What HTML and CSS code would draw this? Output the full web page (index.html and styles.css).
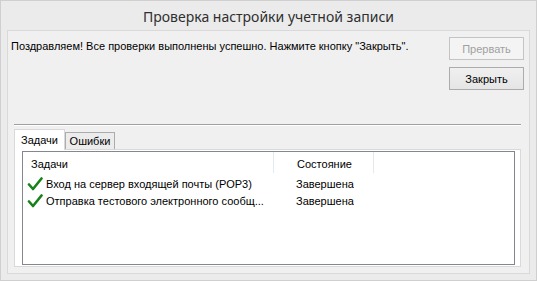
FILE: index.html
```html
<!DOCTYPE html>
<html lang="ru">
  <head>
    <meta charset="UTF-8" />
    <title>Проверка настройки учетной записи</title>
    <link rel="stylesheet" href="styles.css">
  </head>
  <body>
    <div class="window">
      <div class="titlebar">Проверка настройки учетной записи</div>
      <div class="client">
        <div class="top">
          <p class="message">Поздравляем! Все проверки выполнены успешно. Нажмите кнопку "Закрыть".</p>
          <div class="actions">
            <button class="btn" disabled>Прервать</button>
            <button class="btn">Закрыть</button>
          </div>
        </div>
        <div class="separator"></div>

        <div class="tabs">
          <div class="tabstrip">
            <div class="tab active">Задачи</div>
            <div class="tab">Ошибки</div>
          </div>
          <div class="tabpanel">
            <div class="listview">
              <div class="lv-header">
                <div class="col col-task">Задачи</div>
                <div class="col col-state">Состояние</div>
                <div class="col col-rest"></div>
              </div>
              <div class="lv-row">
                <svg class="check" viewBox="0 0 16 16" width="16" height="16">
                  <polyline points="2,8.5 6,13 14.5,2.5" />
                </svg>
                <span class="cell task">Вход на сервер входящей почты (POP3)</span>
                <span class="cell state">Завершена</span>
              </div>
              <div class="lv-row">
                <svg class="check" viewBox="0 0 16 16" width="16" height="16">
                  <polyline points="2,8.5 6,13 14.5,2.5" />
                </svg>
                <span class="cell task">Отправка тестового электронного сообщ...</span>
                <span class="cell state">Завершена</span>
              </div>
            </div>
          </div>
        </div>
      </div>
    </div>
  </body>
</html>
```

FILE: styles.css
```css
* {
  box-sizing: border-box;
}
body {
  margin: 0;
  font-family: "Liberation Sans", Arial, sans-serif;
  font-size: 11px;
  color: #000;
  background: #fff;
}
.window {
  width: 537px;
  height: 281px;
  display: flex;
  flex-direction: column;
  background: #ebebeb;
  border: 1px solid #cfcfcf;
  padding: 0 6px 6px 6px;
}
.titlebar {
  height: 29px;
  line-height: 31px;
  text-align: center;
  font-family: "Noto Sans", "Open Sans", sans-serif;
  font-size: 14px;
  color: #2f2f2f;
}
.client {
  flex: 1;
  display: flex;
  flex-direction: column;
  background: #f0f0f0;
  border: 1px solid #d9d9d9;
}
.top {
  display: flex;
  padding: 6px 5px 0 3px;
}
.message {
  flex: 1;
  margin: 3px 0 0;
  line-height: 13px;
}
.actions {
  display: flex;
  flex-direction: column;
  gap: 7px;
}
.btn {
  width: 75px;
  height: 23px;
  padding: 0;
  font-family: inherit;
  font-size: 11px;
  color: #000;
  border: 1px solid #acacac;
  border-radius: 0;
  background: linear-gradient(#f0f0f0, #e5e5e5);
}
.btn:disabled {
  color: #a0a0a0;
  border-color: #c4c4c4;
  background: #f4f4f4;
}
.separator {
  margin: 34px 8px 0 6px;
  border-top: 1px solid #a0a0a0;
  border-bottom: 1px solid #fff;
}
.tabs {
  flex: 1;
  display: flex;
  flex-direction: column;
  margin: 3px 8px 6px 6px;
}
.tabstrip {
  height: 20px;
  display: flex;
  align-items: flex-end;
}
.tab {
  height: 17px;
  width: 50px;
  line-height: 16px;
  text-align: center;
  background: #ececec;
  border: 1px solid #acacac;
  border-bottom: none;
}
.tab.active {
  position: relative;
  z-index: 1;
  width: 51px;
  height: 21px;
  line-height: 20px;
  margin-bottom: -1px;
  background: #fff;
  border-color: #d9d9d9;
}
.tabpanel {
  flex: 1;
  display: flex;
  background: #fff;
  border: 1px solid #d9d9d9;
  padding: 1px 5px 1px 7px;
}
.listview {
  flex: 1;
  background: #fff;
  border: 1px solid #828790;
}
.lv-header {
  display: flex;
  height: 23px;
}
.col {
  height: 21px;
  line-height: 25px;
  border-right: 1px solid #e3e9f1;
}
.col-task {
  width: 251px;
  padding-left: 8px;
}
.col-state {
  width: 100px;
  text-align: center;
  padding-left: 2px;
}
.col-rest {
  flex: 1;
  border-right: none;
}
.lv-row {
  display: flex;
  align-items: center;
  height: 17px;
  padding-left: 4px;
}
.check {
  flex: none;
  margin-right: 3px;
}
.check polyline {
  fill: none;
  stroke: #17821a;
  stroke-width: 2.6;
  stroke-linecap: round;
  stroke-linejoin: round;
}
.cell {
  white-space: nowrap;
  overflow: hidden;
}
.task {
  width: 228px;
}
.state {
  padding-left: 22px;
}
```
